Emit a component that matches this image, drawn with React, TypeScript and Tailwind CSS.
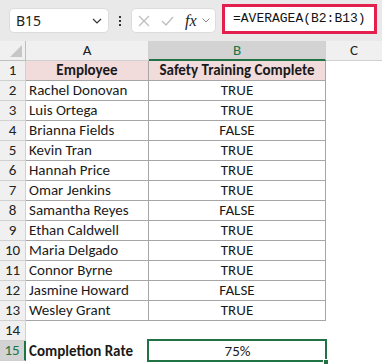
import React from "react";

const rows: [string, string][] = [
  ["Rachel Donovan", "TRUE"],
  ["Luis Ortega", "TRUE"],
  ["Brianna Fields", "FALSE"],
  ["Kevin Tran", "TRUE"],
  ["Hannah Price", "TRUE"],
  ["Omar Jenkins", "TRUE"],
  ["Samantha Reyes", "FALSE"],
  ["Ethan Caldwell", "TRUE"],
  ["Maria Delgado", "TRUE"],
  ["Connor Byrne", "TRUE"],
  ["Jasmine Howard", "FALSE"],
  ["Wesley Grant", "TRUE"],
];

const font = { fontFamily: "Calibri, Carlito, Lato, 'Liberation Sans', sans-serif" };

export default function App() {
  return (
    <div className="w-[382px] h-[364px] bg-white overflow-hidden text-[#1a1a1a]" style={font}>
      {/* formula bar */}
      <div className="h-[41px] bg-[#e9e9e9] flex items-start pt-[8px] pl-[9px]">
        <div className="w-[100px] h-[25px] bg-white rounded-[5px] border border-[#dcdcdc] flex items-center pl-[6px] pr-[6px] justify-between">
          <span className="text-[14px] text-[#222]" style={{ fontFamily: "'Segoe UI', 'Noto Sans', sans-serif" }}>B15</span>
          <svg width="10" height="6" viewBox="0 0 10 6"><path d="M1 1 L5 5 L9 1" fill="none" stroke="#333" strokeWidth="1.2" /></svg>
        </div>
        <div className="w-[22px] h-[25px] flex flex-col items-center justify-center gap-[2px]">
          <div className="w-[2px] h-[2px] bg-[#333]" />
          <div className="w-[2px] h-[2px] bg-[#333]" />
          <div className="w-[2px] h-[2px] bg-[#333]" />
        </div>
        <div className="w-[85px] h-[25px] bg-white rounded-[5px] border border-[#dcdcdc] flex items-center pl-[6px]">
          <svg width="12" height="12" viewBox="0 0 12 12"><path d="M1 1 L11 11 M11 1 L1 11" stroke="#bdbdbd" strokeWidth="1.2" /></svg>
          <svg className="ml-[11px]" width="13" height="10" viewBox="0 0 13 10"><path d="M1 5 L5 9 L12 1" fill="none" stroke="#bdbdbd" strokeWidth="1.2" /></svg>
          <span className="ml-[11px] italic text-[16px] text-[#222] leading-none" style={{ fontFamily: "'Liberation Serif', serif" }}>fx</span>
          <svg className="ml-[5px]" width="8" height="5" viewBox="0 0 8 5"><path d="M0.5 0.5 L4 4 L7.5 0.5" fill="none" stroke="#888" strokeWidth="1" /></svg>
        </div>
        <div className="ml-[6px] -mt-[4px] w-[155px] h-[30px] bg-white border-[3px] border-[#e3204d] flex items-center pl-[8px]">
          <span className="text-[13px] text-[#111]" style={{ fontFamily: "'Liberation Mono', monospace" }}>=AVERAGEA(B2:B13)</span>
        </div>
      </div>

      {/* grid */}
      <div className="grid grid-cols-[26px_123px_177px_1fr] text-[15px] leading-none">
        {/* header row */}
        <div className="h-[20px] bg-[#f0f0f0] border-r border-b border-[#bfbfbf] relative">
          <div className="absolute right-[3px] bottom-[3px] w-0 h-0 border-l-[12px] border-l-transparent border-b-[12px] border-b-[#c6c6c6]" />
        </div>
        <div className="h-[20px] bg-[#f0f0f0] border-r border-b border-[#d0d0d0] flex items-center justify-center text-[#222]">A</div>
        <div className="h-[20px] bg-[#d3d3d3] border-r border-[#d0d0d0] border-b-2 border-b-[#217346] flex items-center justify-center text-[#217346]">B</div>
        <div className="h-[20px] bg-[#f0f0f0] border-b border-[#d0d0d0] flex items-center justify-center text-[#222]">C</div>

        {/* row 1 */}
        <div className="h-[20px] bg-[#f0f0f0] border-r border-b border-[#d0d0d0] flex items-center justify-center text-[#222]">1</div>
        <div className="h-[20px] bg-[#f2dcdb] border-r border-b border-[#a6a6a6] flex items-center justify-center font-bold">Employee</div>
        <div className="h-[20px] bg-[#f2dcdb] border-r border-b border-[#a6a6a6] flex items-center justify-center font-bold">Safety Training Complete</div>
        <div className="h-[20px]" />

        {rows.map(([name, val], i) => (
          <React.Fragment key={name}>
            <div className="h-[20px] bg-[#f0f0f0] border-r border-b border-[#d0d0d0] flex items-center justify-center text-[#222]">{i + 2}</div>
            <div className="h-[20px] border-r border-b border-[#a6a6a6] flex items-center pl-[3px]">{name}</div>
            <div className="h-[20px] border-r border-b border-[#a6a6a6] flex items-center justify-center">{val}</div>
            <div className="h-[20px]" />
          </React.Fragment>
        ))}

        {/* row 14 */}
        <div className="h-[20px] bg-[#f0f0f0] border-r border-b border-[#d0d0d0] flex items-center justify-center text-[#222]">14</div>
        <div className="h-[20px]" />
        <div className="h-[20px]" />
        <div className="h-[20px]" />

        {/* row 15 */}
        <div className="h-[20px] bg-[#d3d3d3] border-r-2 border-r-[#217346] border-b border-b-[#d0d0d0] flex items-center justify-center text-[#217346]">15</div>
        <div className="h-[20px] flex items-center pl-[3px] font-bold">Completion Rate</div>
        <div className="h-[20px] relative flex items-center justify-center">
          75%
          <div className="absolute -left-[2px] -top-[2px] -right-[1px] -bottom-[1px] border-2 border-[#217346]" />
          <div className="absolute -right-[3px] -bottom-[4px] w-[6px] h-[6px] bg-[#217346] border border-white" />
        </div>
        <div className="h-[20px]" />
      </div>
    </div>
  );
}
